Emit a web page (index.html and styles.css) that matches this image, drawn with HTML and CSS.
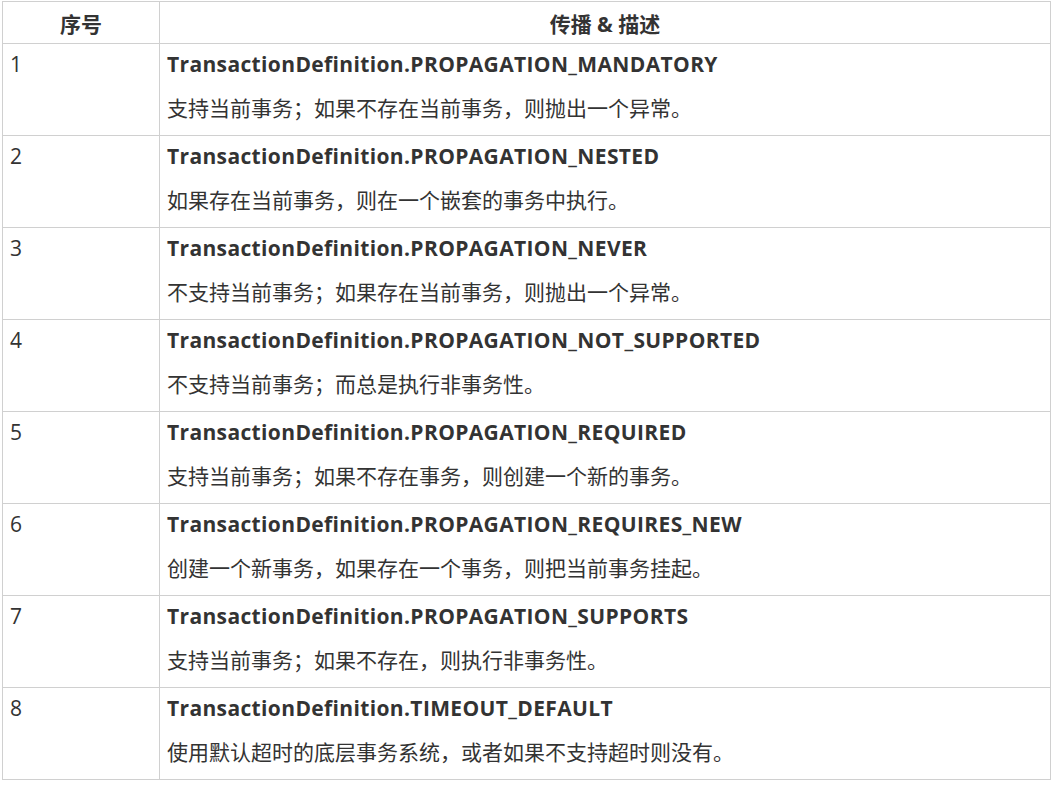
FILE: index.html
```html
<!DOCTYPE html>
<html lang="zh-CN">
<head>
<meta charset="utf-8">
<title>Propagation</title>
<link rel="stylesheet" href="styles.css">
</head>
<body>
<div class="wrap">
<table class="tbl">
  <thead>
    <tr><th class="col-no">序号</th><th class="col-desc">传播 &amp; 描述</th></tr>
  </thead>
  <tbody>
    <tr><td class="no">1</td><td class="desc"><div class="name">TransactionDefinition.PROPAGATION_MANDATORY</div><div class="text">支持当前事务；如果不存在当前事务，则抛出一个异常。</div></td></tr>
    <tr><td class="no">2</td><td class="desc"><div class="name">TransactionDefinition.PROPAGATION_NESTED</div><div class="text">如果存在当前事务，则在一个嵌套的事务中执行。</div></td></tr>
    <tr><td class="no">3</td><td class="desc"><div class="name">TransactionDefinition.PROPAGATION_NEVER</div><div class="text">不支持当前事务；如果存在当前事务，则抛出一个异常。</div></td></tr>
    <tr><td class="no">4</td><td class="desc"><div class="name">TransactionDefinition.PROPAGATION_NOT_SUPPORTED</div><div class="text">不支持当前事务；而总是执行非事务性。</div></td></tr>
    <tr><td class="no">5</td><td class="desc"><div class="name">TransactionDefinition.PROPAGATION_REQUIRED</div><div class="text">支持当前事务；如果不存在事务，则创建一个新的事务。</div></td></tr>
    <tr><td class="no">6</td><td class="desc"><div class="name">TransactionDefinition.PROPAGATION_REQUIRES_NEW</div><div class="text">创建一个新事务，如果存在一个事务，则把当前事务挂起。</div></td></tr>
    <tr><td class="no">7</td><td class="desc"><div class="name">TransactionDefinition.PROPAGATION_SUPPORTS</div><div class="text">支持当前事务；如果不存在，则执行非事务性。</div></td></tr>
    <tr><td class="no">8</td><td class="desc"><div class="name">TransactionDefinition.TIMEOUT_DEFAULT</div><div class="text">使用默认超时的底层事务系统，或者如果不支持超时则没有。</div></td></tr>
  </tbody>
</table>
</div>
</body>
</html>
```
FILE: styles.css
```css
html, body {
  margin: 0;
  padding: 0;
  background: #ffffff;
}
.wrap {
  padding: 1px 0 0 2px;
}
.tbl {
  border-collapse: collapse;
  width: 1049px;
  table-layout: fixed;
  font-family: "Open Sans", "Noto Sans CJK SC", sans-serif;
  font-size: 21px;
  line-height: 32px;
  color: #333333;
}
.tbl th, .tbl td {
  border: 1px solid #d0d0d0;
  vertical-align: top;
  text-align: left;
}
.tbl th {
  font-weight: 700;
  text-align: center;
  padding: 6px 7px 3px;
}
.col-no {
  width: 142px;
}
.tbl td {
  padding: 4px 7px 11px;
}
.name {
  font-weight: 700;
  letter-spacing: 0.36px;
  margin-bottom: 12px;
  white-space: nowrap;
}
.text {
  white-space: nowrap;
}
```
